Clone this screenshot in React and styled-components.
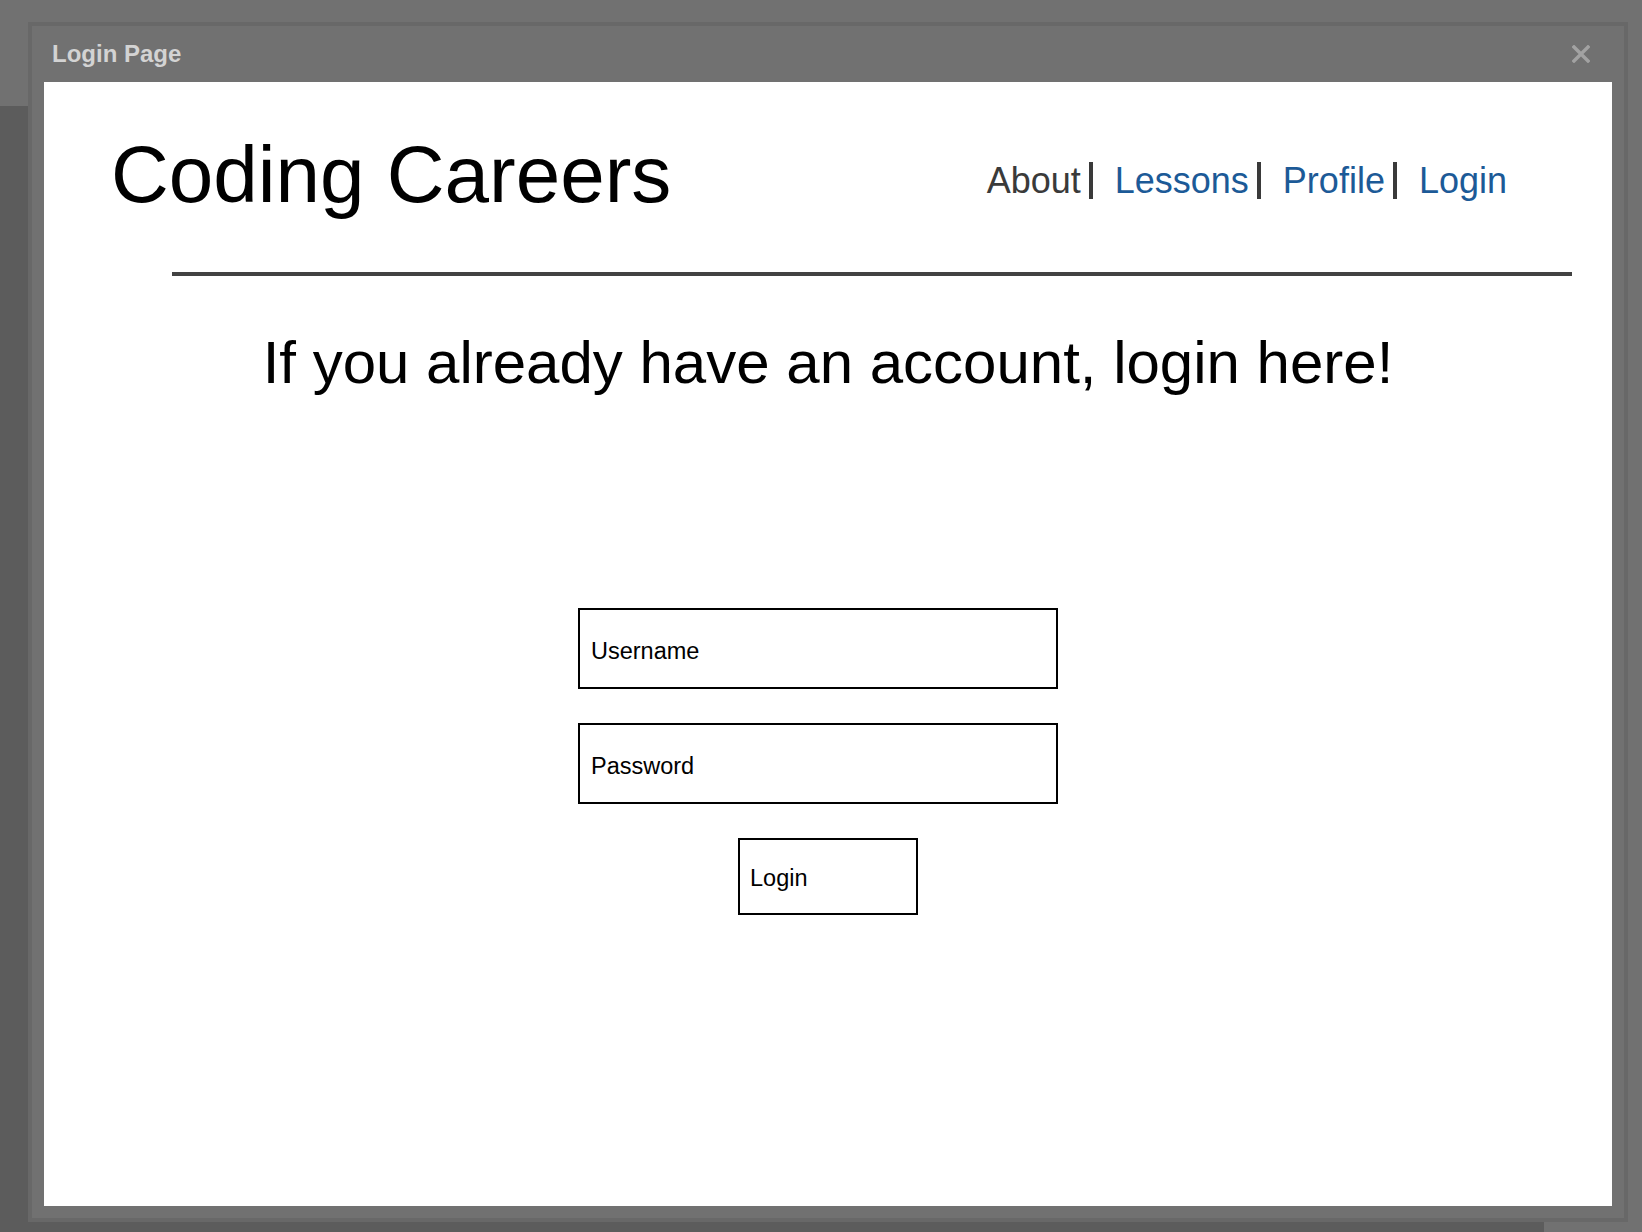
import styled, { createGlobalStyle } from 'styled-components'

const GlobalStyle = createGlobalStyle`
    html, body {
        margin: 0;
        padding: 0;
        font-family: 'Liberation Sans', Arial, sans-serif;
    }
`

const navLinks = [
    { label: 'About', active: true },
    { label: 'Lessons' },
    { label: 'Profile' },
    { label: 'Login' },
]

function CloseIcon() {
    return (
        <svg width="18" height="18" viewBox="0 0 18 18">
            <path d="M2 2 L16 16 M16 2 L2 16" stroke="#a2a2a2" strokeWidth="3.4" strokeLinecap="square" />
        </svg>
    )
}

function App() {
    return (
        <>
            <GlobalStyle />
            <Backdrop>
                <BackdropHeader />
                <BackdropMain />
                <BackdropSide />

                <Window>
                    <TitleBar>
                        <TitleText>Login Page</TitleText>
                        <CloseButton aria-label="Close">
                            <CloseIcon />
                        </CloseButton>
                    </TitleBar>

                    <Content>
                        <Header>
                            <SiteTitle>Coding Careers</SiteTitle>
                            <Nav>
                                {navLinks.map((link, i) => (
                                    <NavItem key={link.label}>
                                        <NavLink $active={link.active}>{link.label}</NavLink>
                                        {i < navLinks.length - 1 && <Separator />}
                                    </NavItem>
                                ))}
                            </Nav>
                        </Header>

                        <Divider />

                        <Heading>If you already have an account, login here!</Heading>

                        <Form onSubmit={(e) => e.preventDefault()}>
                            <TextInput type="text" placeholder="Username" />
                            <TextInput type="password" placeholder="Password" />
                            <SubmitButton type="submit">Login</SubmitButton>
                        </Form>
                    </Content>
                </Window>
            </Backdrop>
        </>
    )
}

const Backdrop = styled.div`
    position: relative;
    width: 100vw;
    height: 100vh;
    overflow: hidden;
    display: grid;
    grid-template-rows: 106px 1fr;
    grid-template-columns: 1fr 98px;
`

const BackdropHeader = styled.div`
    grid-column: 1 / 3;
    background: #717171;
`

const BackdropMain = styled.div`
    background: #5c5c5c;
`

const BackdropSide = styled.div`
    background: #717171;
`

const Window = styled.div`
    position: absolute;
    left: 28px;
    top: 22px;
    width: 1600px;
    height: 1200px;
    box-sizing: border-box;
    border: 4px solid #686868;
    background: #717171;
    display: flex;
    flex-direction: column;
`

const TitleBar = styled.div`
    height: 56px;
    flex-shrink: 0;
    display: flex;
    align-items: center;
    justify-content: space-between;
    padding: 0 34px 0 20px;
`

const TitleText = styled.span`
    font-family: 'Liberation Sans', Arial, sans-serif;
    font-weight: bold;
    font-size: 24px;
    color: #d3d3d3;
`

const CloseButton = styled.button`
    background: none;
    border: none;
    padding: 0;
    width: 18px;
    height: 18px;
    display: flex;
    cursor: pointer;
`

const Content = styled.div`
    flex: 1;
    margin: 0 12px 12px;
    background: #ffffff;
    display: flex;
    flex-direction: column;
`

const Header = styled.header`
    display: flex;
    justify-content: space-between;
    align-items: flex-start;
    padding: 53px 105px 0 67px;
`

const SiteTitle = styled.h1`
    margin: 0;
    font-family: 'Liberation Sans', Arial, sans-serif;
    font-weight: normal;
    font-size: 80px;
    line-height: 79px;
    color: #000;
`

const Nav = styled.nav`
    display: flex;
    align-items: center;
    margin-top: 27px;
`

const NavItem = styled.div`
    display: flex;
    align-items: center;
`

const NavLink = styled.a`
    font-family: 'Liberation Sans', Arial, sans-serif;
    font-size: 36px;
    line-height: 1;
    color: ${(p) => (p.$active ? '#3a3a3a' : '#1c5a97')};
    text-decoration: none;
    cursor: pointer;
`

const Separator = styled.span`
    display: inline-block;
    width: 4px;
    height: 37px;
    background: #3a3a3a;
    margin: 0 22px 0 8px;
`

const Divider = styled.hr`
    margin: 58px 40px 0 128px;
    height: 4px;
    border: none;
    background: #424242;
`

const Heading = styled.h2`
    margin: 57px 0 0;
    text-align: center;
    font-family: 'Liberation Sans', Arial, sans-serif;
    font-weight: normal;
    font-size: 60px;
    line-height: 1;
    color: #000;
`

const Form = styled.form`
    margin-top: 215px;
    display: flex;
    flex-direction: column;
    align-items: center;
    gap: 34px;
`

const TextInput = styled.input`
    box-sizing: border-box;
    width: 480px;
    height: 81px;
    margin-right: 20px;
    border: 2px solid #000;
    border-radius: 0;
    padding: 5px 11px 0;
    font-family: 'Liberation Sans', Arial, sans-serif;
    font-size: 23.5px;
    color: #000;
    outline: none;

    &::placeholder {
        color: #000;
        opacity: 1;
    }
`

const SubmitButton = styled.button`
    box-sizing: border-box;
    width: 180px;
    height: 77px;
    border: 2px solid #000;
    border-radius: 0;
    background: #fff;
    padding: 4px 10px 0;
    text-align: left;
    font-family: 'Liberation Sans', Arial, sans-serif;
    font-size: 23.5px;
    color: #000;
    cursor: pointer;
`

export default App
